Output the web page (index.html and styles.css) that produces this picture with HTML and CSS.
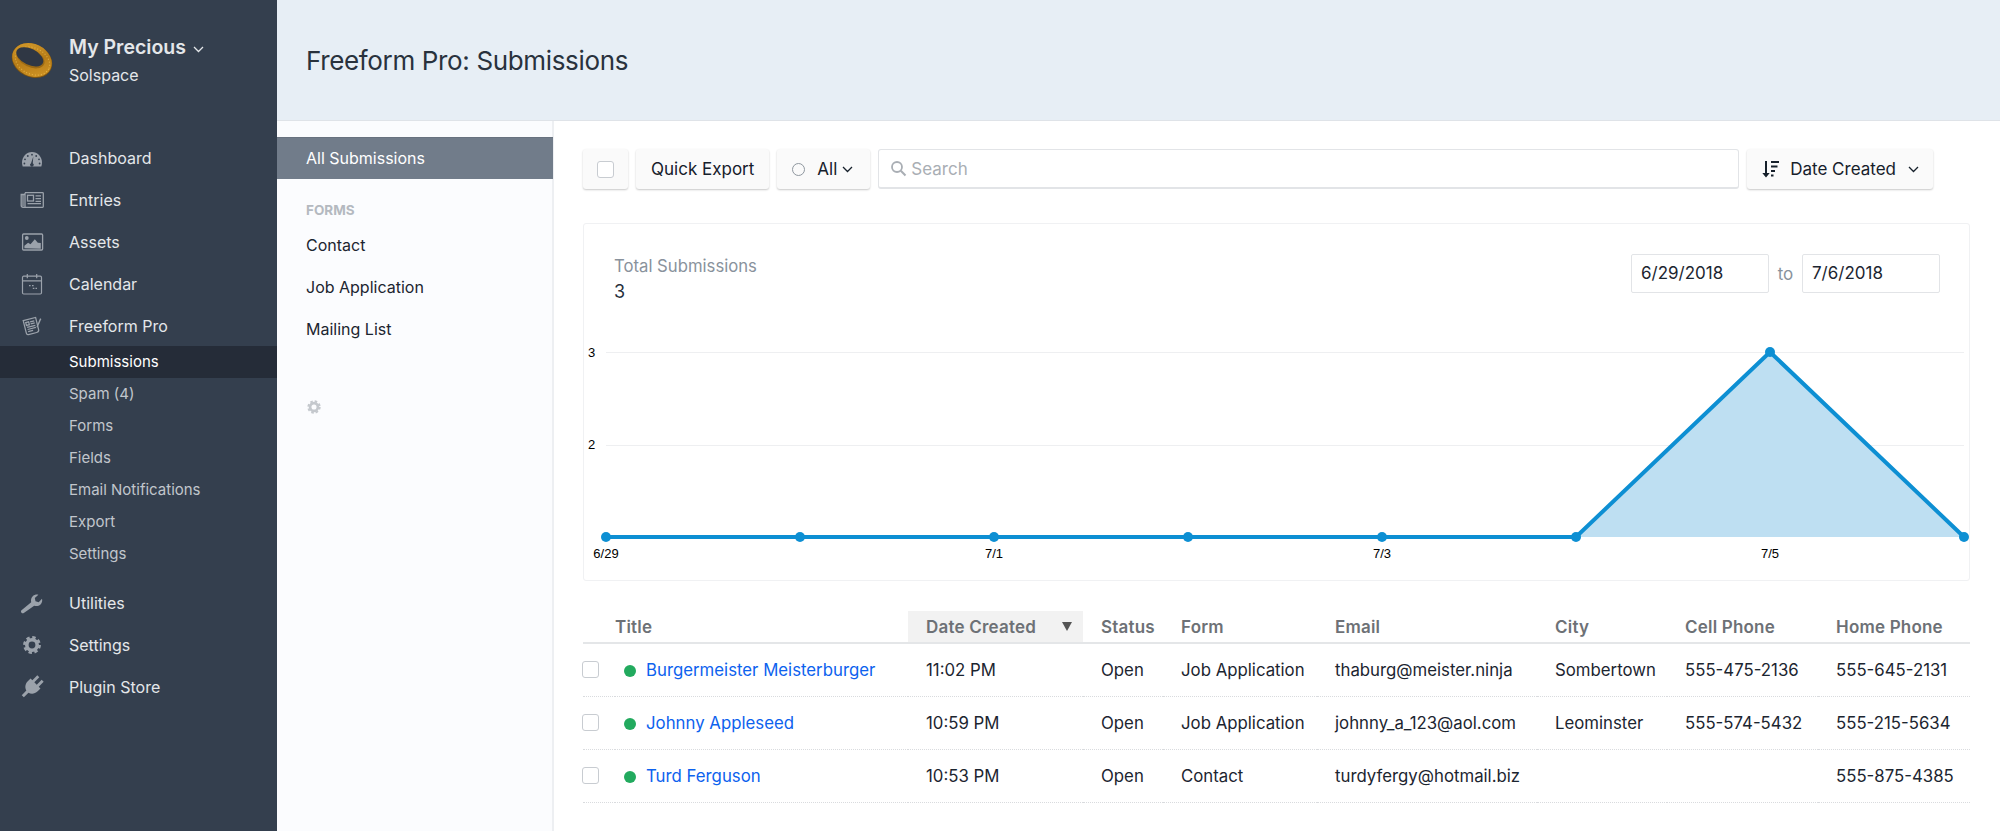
FILE: index.html
```html
<!DOCTYPE html>
<html lang="en">
<head>
  <meta charset="UTF-8">
  <meta name="viewport" content="width=device-width, initial-scale=1.0">
  <title>Freeform Pro: Submissions</title>
  <link rel="stylesheet" href="styles.css">
</head>
<body>
  <svg class="defs" width="0" height="0">
    <defs>
      <g id="gear">
        <circle cx="12" cy="12" r="5.2" fill="none" stroke="currentColor" stroke-width="3.6"/>
        <circle cx="12" cy="12" r="7.6" fill="none" stroke="currentColor" stroke-width="2.6" stroke-dasharray="3.4 2.57"/>
      </g>
      <linearGradient id="gold" x1="0" y1="0" x2="1" y2="1">
        <stop offset="0" stop-color="#d9a030"/>
        <stop offset="0.5" stop-color="#b67c18"/>
        <stop offset="1" stop-color="#d79a28"/>
      </linearGradient>
    </defs>
  </svg>

  <aside class="sidebar">
    <div class="brand">
      <svg class="ring" width="46" height="46" viewBox="0 0 46 46">
        <ellipse cx="23" cy="23.500" rx="21" ry="16.500" transform="rotate(26 23 23.500)" fill="#7f5510"/>
        <ellipse cx="23" cy="23" rx="20.500" ry="16" transform="rotate(26 23 23)" fill="url(#gold)"/>
        <ellipse cx="23.500" cy="24" rx="18" ry="13" transform="rotate(26 23.500 24)" fill="none" stroke="#efc050" stroke-width="1.200" stroke-dasharray="1 2" opacity="0.7"/>
        <ellipse cx="21.500" cy="21" rx="15" ry="9" transform="rotate(26 21.500 21)" fill="#9c6a14"/>
        <ellipse cx="20.800" cy="19.800" rx="14.500" ry="8" transform="rotate(26 20.800 19.800)" fill="#2f3744"/>
      </svg>
      <div class="brand-text">
        <div class="brand-name">My Precious
          <svg class="chev" width="11" height="7" viewBox="0 0 11 7"><path d="M1 1l4.500 4.500L10 1" fill="none" stroke="currentColor" stroke-width="1.300"/></svg>
        </div>
        <div class="brand-org">Solspace</div>
      </div>
    </div>

    <nav>
      <a class="nav-item">
        <svg width="24" height="24" viewBox="0 0 24 24"><path d="M2.700 20.500c-.5-1.200-.7-2.600-.7-4C2 10.800 6.500 6 12 6s10 4.800 10 10.500c0 1.400-.2 2.800-.7 4z" fill="currentColor"/><g fill="#343f4e"><circle cx="12" cy="8.700" r=".9"/><circle cx="7.800" cy="10" r=".9"/><circle cx="16.200" cy="10" r=".9"/><circle cx="5" cy="13.300" r=".9"/><circle cx="19" cy="13.300" r=".9"/><circle cx="4.400" cy="17.500" r=".9"/><circle cx="19.600" cy="17.500" r=".9"/><path d="M13.300 10.500l-.5 6.700a1.800 1.800 0 1 1-1.800 0z"/></g></svg>
        <span>Dashboard</span>
      </a>
      <a class="nav-item">
        <svg width="24" height="24" viewBox="0 0 24 24"><g fill="none" stroke="currentColor" stroke-width="1.300"><path d="M5 4.700h17.600a.7.700 0 0 1 .7.700v13.200a.7.700 0 0 1-.7.700H3a1.800 1.800 0 0 1-1.800-1.800V6.500H5"/><path d="M5 4.700v14.300M3 6.500v12"/><rect x="7.500" y="7.300" width="6" height="5.700"/></g><path d="M15.500 7.300h5.500v1.300h-5.500zM15.500 10h5.500v1.300h-5.500zM15.500 12.700h5.500V14h-5.500zM7.500 15h13.500v1.300H7.500z" fill="currentColor"/></svg>
        <span>Entries</span>
      </a>
      <a class="nav-item">
        <svg width="24" height="24" viewBox="0 0 24 24"><rect x="2.600" y="4" width="20" height="16" rx="1" fill="none" stroke="currentColor" stroke-width="1.300"/><circle cx="6.800" cy="8" r="1.900" fill="currentColor"/><path d="M4.400 18.300v-2.500l3.700-3 2.400 1.500 4.300-5 3 3.500 3 .3v5.700z" fill="currentColor"/></svg>
        <span>Assets</span>
      </a>
      <a class="nav-item">
        <svg width="24" height="24" viewBox="0 0 24 24"><g fill="none" stroke="currentColor" stroke-width="1.200"><rect x="2.500" y="4.200" width="19" height="17.800" rx="1.200"/><path d="M2.500 8.800h19M7.300 2v4.300M16.700 2v4.300"/></g><path d="M9 13h1.600v1.300H9zM12 13h1.600v1.300H12zM12.800 15.700h1.600V17h-1.600zM15.500 15.700H17V17h-1.500z" fill="currentColor"/></svg>
        <span>Calendar</span>
      </a>
      <a class="nav-item">
        <svg width="24" height="24" viewBox="0 0 24 24"><g transform="translate(1.800 1.800) scale(.85)"><g transform="rotate(-14 11 12)" fill="none" stroke="currentColor" stroke-width="1.500"><path d="M3.500 3.500h15v14.500a3 3 0 0 1-3 3h-10a2 2 0 0 1-2-2z"/><path d="M5.800 6.500h3.500v3.500H5.800zM11 7h5M11 9.500h5M6 12.500h10M6 15h10M6 17.500h6"/></g><path d="M21.500 3l1.500.7-4.500 10-1.300-.6z" fill="currentColor"/></g></svg>
        <span>Freeform Pro</span>
      </a>
      <div class="subnav">
        <a class="sub-item is-active">Submissions</a>
        <a class="sub-item">Spam (4)</a>
        <a class="sub-item">Forms</a>
        <a class="sub-item">Fields</a>
        <a class="sub-item">Email Notifications</a>
        <a class="sub-item">Export</a>
        <a class="sub-item">Settings</a>
      </div>
      <a class="nav-item">
        <svg width="24" height="24" viewBox="0 0 24 24"><path d="M3.800 22a1.900 1.900 0 0 1-2.600-2.600l10-8.200c-.6-2.600.1-4.800 1.800-6.300 1.500-1.300 3.500-1.800 5.400-1.200l-3.600 3.300.7 3.300 3.200.9 3.300-3.500c.6 2.100 0 4.200-1.500 5.700-1.600 1.500-3.800 2-6.300 1.300z" fill="currentColor"/></svg>
        <span>Utilities</span>
      </a>
      <a class="nav-item">
        <svg width="24" height="24" viewBox="0 0 24 24"><use href="#gear"/></svg>
        <span>Settings</span>
      </a>
      <a class="nav-item">
        <svg width="24" height="24" viewBox="0 0 24 24"><path transform="rotate(45 12 12)" d="M7.500 0h2.800v7h3.400V0h2.800v7H19v4c0 4-2.600 6.800-5.500 7.500V25h-3v-6.500C7.600 17.800 5 15 5 11V7h2.500z" fill="currentColor"/></svg>
        <span>Plugin Store</span>
      </a>
    </nav>
  </aside>

  <div class="page">
    <header class="page-head">
      <h1>Freeform Pro: Submissions</h1>
    </header>

    <div class="page-body">
      <aside class="forms-nav">
        <a class="forms-link is-active">All Submissions</a>
        <div class="forms-label">FORMS</div>
        <a class="forms-link">Contact</a>
        <a class="forms-link">Job Application</a>
        <a class="forms-link">Mailing List</a>
        <svg class="forms-gear" width="18" height="18" viewBox="0 0 24 24"><use href="#gear"/></svg>
      </aside>

      <main class="content">
        <div class="toolbar">
          <div class="btn btn-check"><span class="checkbox"></span></div>
          <div class="btn">Quick Export</div>
          <div class="btn btn-status">
            <span class="ring-dot"></span>
            <span>All</span>
            <svg width="11" height="7" viewBox="0 0 11 7"><path d="M1 1l4.500 4.500L10 1" fill="none" stroke="currentColor" stroke-width="1.300"/></svg>
          </div>
          <div class="search">
            <svg width="17" height="17" viewBox="0 0 17 17"><circle cx="7" cy="7" r="5" fill="none" stroke="currentColor" stroke-width="1.800"/><path d="M10.800 10.800l4.700 4.700" stroke="currentColor" stroke-width="2"/></svg>
            <span>Search</span>
          </div>
          <div class="btn btn-sort">
            <svg width="18" height="18" viewBox="0 0 18 18" fill="currentColor"><path d="M3 1h2v12h2.700L4 17.500.3 13H3z"/><path d="M9 1h8v2H9zM9 5.500h6.500v2H9zM9 10h4v2H9zM9 14.500h2.500v2H9z"/></svg>
            <span>Date Created</span>
            <svg class="sort-chev" width="11" height="7" viewBox="0 0 11 7"><path d="M1 1l4.500 4.500L10 1" fill="none" stroke="currentColor" stroke-width="1.300"/></svg>
          </div>
        </div>

        <section class="chart-card">
          <div class="chart-head">
            <div>
              <div class="chart-title">Total Submissions</div>
              <div class="chart-total">3</div>
            </div>
            <div class="date-range">
              <span class="date-field">6/29/2018</span>
              <span class="date-to">to</span>
              <span class="date-field">7/6/2018</span>
            </div>
          </div>
          <svg class="chart" width="1386" height="250" viewBox="0 0 1386 250">
            <g stroke="#eeeff1" stroke-width="1">
              <path d="M22 22.500H1380M22 115.500H1380"/>
            </g>
            <polygon points="992,207 1186,22 1380,207" fill="#bedff2"/>
            <polyline points="22,207 992,207 1186,22 1380,207" fill="none" stroke="#0d8fd3" stroke-width="4"/>
            <g fill="#0d8fd3">
              <circle cx="22" cy="207" r="5"/>
              <circle cx="216" cy="207" r="5"/>
              <circle cx="410" cy="207" r="5"/>
              <circle cx="604" cy="207" r="5"/>
              <circle cx="798" cy="207" r="5"/>
              <circle cx="992" cy="207" r="5"/>
              <circle cx="1186" cy="22" r="5"/>
              <circle cx="1380" cy="207" r="5"/>
            </g>
            <g class="chart-axis">
              <text x="4" y="27">3</text>
              <text x="4" y="119">2</text>
              <text x="22" y="228" text-anchor="middle">6/29</text>
              <text x="410" y="228" text-anchor="middle">7/1</text>
              <text x="798" y="228" text-anchor="middle">7/3</text>
              <text x="1186" y="228" text-anchor="middle">7/5</text>
            </g>
          </svg>
        </section>

        <table class="subs">
          <colgroup>
            <col class="c-check"><col class="c-title"><col class="c-date"><col class="c-status"><col class="c-form"><col class="c-email"><col class="c-city"><col class="c-cell"><col class="c-home">
          </colgroup>
          <thead>
            <tr>
              <th></th>
              <th>Title</th>
              <th class="sorted">Date Created<span class="sort-arrow"></span></th>
              <th>Status</th>
              <th>Form</th>
              <th>Email</th>
              <th>City</th>
              <th>Cell Phone</th>
              <th>Home Phone</th>
            </tr>
          </thead>
          <tbody>
            <tr>
              <td><span class="checkbox"></span></td>
              <td><span class="dot"></span><a class="link">Burgermeister Meisterburger</a></td>
              <td class="date">11:02 PM</td>
              <td>Open</td>
              <td>Job Application</td>
              <td>thaburg@meister.ninja</td>
              <td>Sombertown</td>
              <td>555-475-2136</td>
              <td>555-645-2131</td>
            </tr>
            <tr>
              <td><span class="checkbox"></span></td>
              <td><span class="dot"></span><a class="link">Johnny Appleseed</a></td>
              <td class="date">10:59 PM</td>
              <td>Open</td>
              <td>Job Application</td>
              <td>johnny_a_123@aol.com</td>
              <td>Leominster</td>
              <td>555-574-5432</td>
              <td>555-215-5634</td>
            </tr>
            <tr>
              <td><span class="checkbox"></span></td>
              <td><span class="dot"></span><a class="link">Turd Ferguson</a></td>
              <td class="date">10:53 PM</td>
              <td>Open</td>
              <td>Contact</td>
              <td>turdyfergy@hotmail.biz</td>
              <td></td>
              <td></td>
              <td>555-875-4385</td>
            </tr>
          </tbody>
        </table>
      </main>
    </div>
  </div>
</body>
</html>
```

FILE: styles.css
```css
* { box-sizing: border-box; }
html, body { height: 100%; }
body {
  margin: 0;
  display: flex;
  overflow: hidden;
  font-family: Inter, "Liberation Sans", sans-serif;
  font-size: 17px;
  color: #1c2530;
  background: white;
}
.defs { position: absolute; }

/* left sidebar */
.sidebar {
  width: 277px;
  flex: none;
  background: #343f4e;
  color: #e4e7ea;
}
.brand {
  height: 137px;
  padding: 37px 0 0 9px;
  display: flex;
}
.ring { margin-right: 14px; }
.brand-name { font-size: 19.5px; font-weight: 600; line-height: 20px; }
.chev { margin-left: 2px; vertical-align: 1px; }
.brand-org { font-size: 16px; line-height: 20px; margin-top: 8px; }
.nav-item {
  height: 42px;
  padding-left: 20px;
  display: flex;
  align-items: center;
  gap: 25px;
  font-size: 16px;
}
.nav-item svg { color: #9ba2ab; flex: none; }
.subnav { margin: -1px 0 12px; }
.sub-item {
  display: block;
  height: 32px;
  line-height: 32px;
  padding-left: 69px;
  font-size: 15px;
  color: #c1c6cc;
}
.sub-item.is-active { background: #252c38; color: white; }

/* main area */
.page { flex: 1; min-width: 0; display: flex; flex-direction: column; }
.page-head {
  height: 121px;
  background: #e7eef5;
  border-bottom: 1px solid #dfe3e8;
  padding-left: 29px;
  display: flex;
  align-items: center;
}
h1 { margin: 0; font-size: 26px; font-weight: 400; letter-spacing: -0.35px; color: #29323d; }
.page-body { flex: 1; display: flex; }

.forms-nav {
  width: 277px;
  flex: none;
  background: #fbfcfe;
  border-right: 2px solid #edeff2;
  padding-top: 16px;
  font-size: 16px;
}
.forms-link {
  display: block;
  height: 42px;
  line-height: 42px;
  padding-left: 29px;
}
.forms-link.is-active {
  margin-right: -1px;
  background: #717c8a;
  color: white;
  border-top: 1px solid #68727f;
  line-height: 40px;
}
.forms-label {
  margin: 23px 0 6px;
  padding-left: 29px;
  font-size: 13.5px;
  font-weight: 700;
  line-height: 16px;
  color: #b4b9c0;
}
.forms-gear { display: block; margin: 48px 0 0 28px; color: #c4c8cd; }

.content { flex: 1; min-width: 0; padding: 28px 30px 0 29px; }

.toolbar { display: flex; gap: 8px; height: 40px; padding-right: 37px; }
.btn {
  display: flex;
  align-items: center;
  padding: 0 15px;
  background: #fafafa;
  border-radius: 3px;
  box-shadow: 0 1px 2px rgba(0, 0, 0, 0.22);
  color: #16202b;
}
.btn-check { width: 45px; padding: 0; justify-content: center; }
.checkbox {
  display: block;
  width: 17px;
  height: 17px;
  background: white;
  border: 1px solid #c8ccd1;
  border-radius: 3px;
}
.btn-status { gap: 12px; padding: 0 17px 0 15px; }
.btn-status svg { margin-left: -7px; }
.ring-dot {
  width: 13px;
  height: 13px;
  border: 1.5px solid #8f979f;
  border-radius: 50%;
}
.search {
  flex: 1;
  display: flex;
  align-items: center;
  gap: 4px;
  padding-left: 11px;
  background: white;
  border: 1px solid #e2e4e7;
  border-bottom-width: 2px;
  border-radius: 3px;
  color: #a9aeb4;
}
.btn-sort { padding: 0 14px 0 15px; gap: 10px; }
.sort-chev { margin-left: 2px; }

.chart-card {
  margin-top: 34px;
  height: 358px;
  border: 1px solid #f0f1f3;
  border-radius: 3px;
}
.chart-head {
  height: 106px;
  padding: 30px 29px 0 30px;
  display: flex;
  justify-content: space-between;
}
.chart-title { font-size: 16.7px; line-height: 24px; color: #89929c; }
.chart-total { font-size: 18px; line-height: 27px; color: #27303b; }
.date-range { display: flex; align-items: center; height: 39px; }
.date-field {
  width: 138px;
  height: 39px;
  line-height: 37px;
  padding-left: 9px;
  border: 1px solid #e2e4e7;
  border-radius: 2px;
}
.date-to { width: 33px; text-align: center; color: #89929c; }
.chart { display: block; }
.chart-axis text {
  font-family: "Liberation Sans", sans-serif;
  font-size: 13px;
  fill: #000;
}

.subs {
  width: 100%;
  margin-top: 30px;
  border-collapse: collapse;
  table-layout: fixed;
}
.c-check { width: 32px; }
.c-title { width: 293px; }
.c-date { width: 175px; }
.c-status { width: 80px; }
.c-form { width: 154px; }
.c-email { width: 220px; }
.c-city { width: 130px; }
.c-cell { width: 151px; }
th {
  height: 32px;
  text-align: left;
  font-weight: 600;
  letter-spacing: 0.2px;
  color: #6d7176;
  border-bottom: 2px solid #e4e6e8;
  padding: 0;
}
th:nth-child(n+3), td:nth-child(n+3) { padding-left: 18px; }
th.sorted { background: #f2f2f2; position: relative; }
.sort-arrow {
  position: absolute;
  right: 11px;
  top: 11px;
  border-left: 5px solid transparent;
  border-right: 5px solid transparent;
  border-top: 9px solid #555;
}
td {
  height: 53px;
  padding: 0;
  font-size: 16.8px;
  border-bottom: 1px dotted #d9dbde;
}
td .checkbox { margin-left: -1px; }
.dot {
  display: inline-block;
  width: 12px;
  height: 12px;
  margin: 0 10px 0 9px;
  border-radius: 50%;
  background: #22aa5e;
  vertical-align: -1px;
}
.link { color: #0d62ee; }
```
